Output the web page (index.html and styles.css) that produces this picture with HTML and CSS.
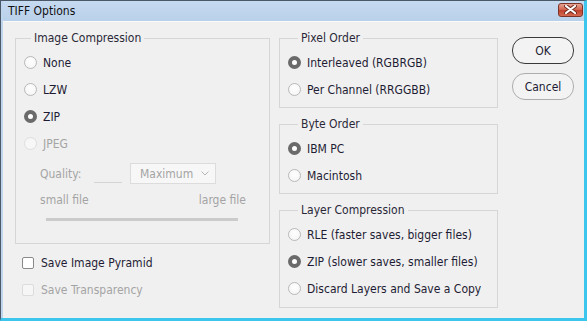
FILE: index.html
```html
<!DOCTYPE html>
<html lang="en">

<head>
    <meta charset="UTF-8">
    <title>TIFF Options</title>
    <link rel="stylesheet" href="styles.css">
</head>

<body>
    <div class="window">
        <!-- Title bar -->
        <div class="titlebar">
            <span class="title">TIFF Options</span>
            <button class="close-btn" aria-label="Close">
                <svg width="13" height="9" viewBox="0 0 13 9">
                    <path d="M2 1 L11 8 M11 1 L2 8" stroke="#6e2a1e" stroke-width="4" stroke-linecap="round" />
                    <path d="M2 1 L11 8 M11 1 L2 8" stroke="#ffffff" stroke-width="2.2" stroke-linecap="round" />
                </svg>
            </button>
        </div>

        <div class="client">
            <!-- Left column -->
            <div class="col-left">
                <fieldset class="group group-image">
                    <legend>Image Compression</legend>
                    <label class="radio"><span class="dot"></span>None</label>
                    <label class="radio"><span class="dot"></span>LZW</label>
                    <label class="radio checked"><span class="dot"></span>ZIP</label>
                    <label class="radio disabled"><span class="dot"></span>JPEG</label>

                    <div class="quality-row">
                        <span class="quality-label">Quality:</span>
                        <span class="quality-input"></span>
                        <div class="select">
                            <span>Maximum</span>
                            <svg width="8" height="5" viewBox="0 0 8 5">
                                <path d="M0.5 0.5 L4 4 L7.5 0.5" fill="none" stroke="#b4b4b4" stroke-width="1" />
                            </svg>
                        </div>
                    </div>
                    <div class="size-row">
                        <span>small file</span>
                        <span>large file</span>
                    </div>
                    <div class="slider"></div>
                </fieldset>

                <label class="check"><span class="box"></span>Save Image Pyramid</label>
                <label class="check disabled"><span class="box"></span>Save Transparency</label>
            </div>

            <!-- Right column -->
            <div class="col-right">
                <fieldset class="group">
                    <legend>Pixel Order</legend>
                    <label class="radio checked"><span class="dot"></span>Interleaved (RGBRGB)</label>
                    <label class="radio"><span class="dot"></span>Per Channel (RRGGBB)</label>
                </fieldset>

                <fieldset class="group">
                    <legend>Byte Order</legend>
                    <label class="radio checked"><span class="dot"></span>IBM PC</label>
                    <label class="radio"><span class="dot"></span>Macintosh</label>
                </fieldset>

                <fieldset class="group group-layer">
                    <legend>Layer Compression</legend>
                    <label class="radio"><span class="dot"></span>RLE (faster saves, bigger files)</label>
                    <label class="radio checked"><span class="dot"></span>ZIP (slower saves, smaller files)</label>
                    <label class="radio"><span class="dot"></span>Discard Layers and Save a Copy</label>
                </fieldset>
            </div>

            <!-- Buttons -->
            <div class="col-buttons">
                <button class="btn btn-default">OK</button>
                <button class="btn">Cancel</button>
            </div>
        </div>
    </div>
</body>

</html>
```

FILE: styles.css
```css
* {
    box-sizing: border-box;
}

body {
    margin: 0;
    font-family: "DejaVu Sans Condensed", "DejaVu Sans", sans-serif;
    font-size: 12px;
    color: #1e1c34;
}

.window {
    width: 587px;
    height: 321px;
    display: flex;
    flex-direction: column;
    background: #bfd5ee;
    border-top: 1px solid #4a5868;
    border-left: 1px solid #4a5868;
    border-right: 3px solid #3cc6ee;
    border-bottom: 3px solid #3cc6ee;
    padding-left: 2px;
}

.titlebar {
    height: 20px;
    display: flex;
    align-items: center;
    justify-content: space-between;
    padding: 0 1px 0 5px;
    background: linear-gradient(#c6daf0, #b9d0ea);
}

.title {
    color: #111;
    font-size: 12px;
}

.close-btn {
    width: 25px;
    height: 14px;
    margin-top: -3px;
    padding: 0;
    border: 1px solid #7c3427;
    border-radius: 3px;
    background: linear-gradient(#e7a494, #d0604a 50%, #c0412b 51%, #d46a52);
    display: flex;
    align-items: center;
    justify-content: center;
}

.client {
    flex: 1;
    display: flex;
    background: #f0f0f0;
    border-top: 1px solid #fafafa;
    padding: 8px 0 0 12px;
}

/* Group boxes */
.group {
    margin: 0;
    border: 1px solid #d6d6d6;
    padding: 3px 8px 4px 8px;
}

.group legend {
    padding: 0 3px;
    margin-left: 10px;
    line-height: 16px;
    color: #2a2838;
}

.col-left {
    width: 255px;
    display: flex;
    flex-direction: column;
}

.group-image {
    padding-bottom: 22px;
}

.group-image legend {
    margin-left: 7px;
}

.group-layer {
    padding-bottom: 5px;
}

.col-right {
    width: 219px;
    margin-left: 9px;
    display: flex;
    flex-direction: column;
    gap: 8px;
}

.col-buttons {
    margin-left: 14px;
    padding-top: 7px;
    display: flex;
    flex-direction: column;
    gap: 9px;
}

/* Radios */
.radio {
    height: 27px;
    display: flex;
    align-items: center;
    gap: 6px;
}

.dot {
    width: 13px;
    height: 13px;
    border-radius: 50%;
    border: 1px solid #b9b9b9;
    background: radial-gradient(circle at 50% 40%, #ffffff, #f2f2f2);
}

.radio.checked .dot {
    border: 4.5px solid #6a6a6a;
    background: #ffffff;
}

.radio.disabled {
    color: #a4a4a4;
}

.radio.disabled .dot {
    border-color: #dedede;
    background: #f7f7f7;
}

/* JPEG quality controls */
.quality-row {
    height: 21px;
    margin-top: 6px;
    padding-left: 16px;
    display: flex;
    align-items: center;
    color: #a4a4a4;
}

.quality-label {
    width: 54px;
}

.quality-input {
    width: 28px;
    height: 19px;
    border-bottom: 1px solid #d4d4d4;
    margin-right: 8px;
}

.select {
    width: 86px;
    height: 21px;
    border: 1px solid #dcdcdc;
    background: #f7f7f7;
    display: flex;
    align-items: center;
    justify-content: space-between;
    padding: 0 6px 0 9px;
}

.size-row {
    margin-top: 8px;
    line-height: 16px;
    padding: 0 15px 0 16px;
    display: flex;
    justify-content: space-between;
    color: #a4a4a4;
}

.slider {
    height: 3px;
    width: 192px;
    margin: 10px 0 0 22px;
    background: #cbcbcb;
}

/* Checkboxes */
.check {
    height: 27px;
    display: flex;
    align-items: center;
    gap: 7px;
    padding-left: 7px;
}

.check:first-of-type {
    margin-top: 5px;
}

.box {
    width: 12px;
    height: 12px;
    border: 1px solid #8a8a8a;
    border-radius: 2px;
    background: #fff;
}

.check.disabled {
    color: #a4a4a4;
}

.check.disabled .box {
    border-color: #dcdcdc;
    background: #f6f6f6;
}

/* Buttons */
.btn {
    width: 62px;
    height: 27px;
    border: 1px solid #adadad;
    border-radius: 13px;
    background: #f3f3f3;
    font-family: inherit;
    font-size: 12px;
    color: #1e1c34;
    padding: 0;
}

.btn-default {
    border-color: #3a3a3a;
}
```
